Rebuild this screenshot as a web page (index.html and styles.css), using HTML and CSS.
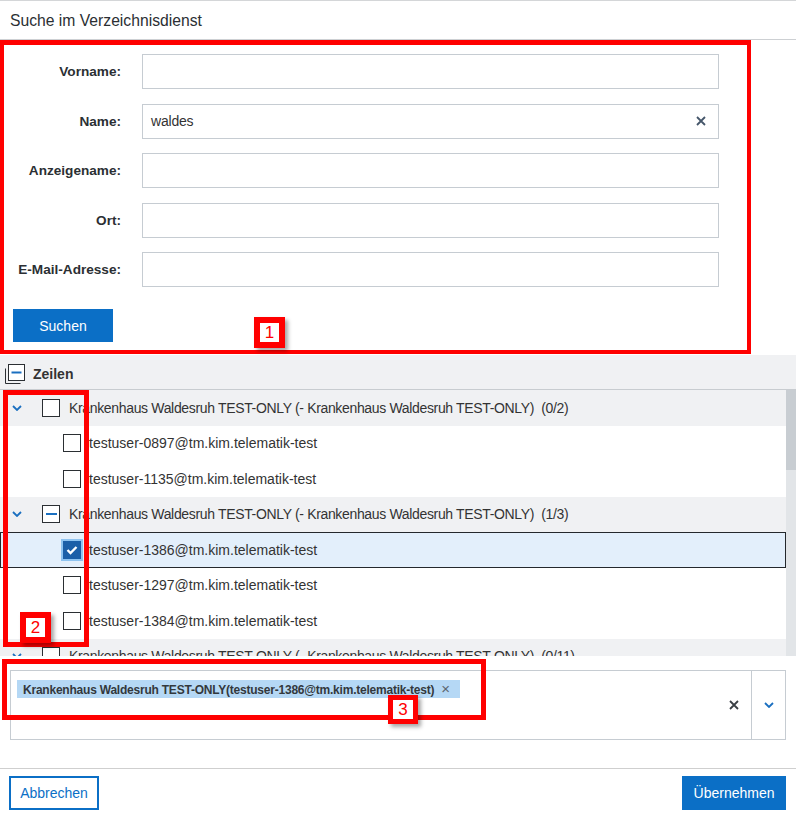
FILE: index.html
```html
<!DOCTYPE html>
<html>
  <head>
    <meta charset="utf-8">
    <title>Suche im Verzeichnisdienst</title>
    <link rel="stylesheet" href="styles.css">
  </head>
  <body>
    <div class="dialog">
      <div class="dialog-title">Suche im Verzeichnisdienst</div>

      <form class="search-form">
        <div class="field">
          <label>Vorname:</label>
          <div class="input"></div>
        </div>
        <div class="field">
          <label>Name:</label>
          <div class="input">
            <span class="value">waldes</span>
            <svg class="clear" width="10" height="10" viewBox="0 0 10 10"><path d="M1 1L9 9M9 1L1 9" /></svg>
          </div>
        </div>
        <div class="field">
          <label>Anzeigename:</label>
          <div class="input"></div>
        </div>
        <div class="field">
          <label>Ort:</label>
          <div class="input"></div>
        </div>
        <div class="field">
          <label>E-Mail-Adresse:</label>
          <div class="input"></div>
        </div>
        <button type="button" class="btn btn-primary btn-search">Suchen</button>
      </form>

      <div class="grid-head">
        <svg class="multi-icon" width="21" height="20" viewBox="0 0 21 20">
          <path class="back" d="M0.5 4.5V19.5H15.5" />
          <rect class="front" x="3.5" y="0.5" width="16" height="16" />
          <path class="minus" d="M6.5 8.5H16.5" />
        </svg>
        <span>Zeilen</span>
      </div>

      <div class="tree">
        <div class="tree-rows">
          <div class="row group">
            <svg class="chev" width="10" height="6" viewBox="0 0 10 6"><path d="M1 1L5 5L9 1" /></svg>
            <span class="check"></span>
            <span class="label">Krankenhaus Waldesruh TEST-ONLY (- Krankenhaus Waldesruh TEST-ONLY)  (0/2)</span>
          </div>
          <div class="row child">
            <span class="check"></span>
            <span class="label">testuser-0897@tm.kim.telematik-test</span>
          </div>
          <div class="row child">
            <span class="check"></span>
            <span class="label">testuser-1135@tm.kim.telematik-test</span>
          </div>
          <div class="row group">
            <svg class="chev" width="10" height="6" viewBox="0 0 10 6"><path d="M1 1L5 5L9 1" /></svg>
            <span class="check partial"></span>
            <span class="label">Krankenhaus Waldesruh TEST-ONLY (- Krankenhaus Waldesruh TEST-ONLY)  (1/3)</span>
          </div>
          <div class="row child selected">
            <span class="check checked">
              <svg width="12" height="10" viewBox="0 0 12 10"><path d="M1.5 5L4.5 8L10.5 2" /></svg>
            </span>
            <span class="label">testuser-1386@tm.kim.telematik-test</span>
          </div>
          <div class="row child">
            <span class="check"></span>
            <span class="label">testuser-1297@tm.kim.telematik-test</span>
          </div>
          <div class="row child">
            <span class="check"></span>
            <span class="label">testuser-1384@tm.kim.telematik-test</span>
          </div>
          <div class="row group">
            <svg class="chev" width="10" height="6" viewBox="0 0 10 6"><path d="M1 1L5 5L9 1" /></svg>
            <span class="check"></span>
            <span class="label">Krankenhaus Waldesruh TEST-ONLY (- Krankenhaus Waldesruh TEST-ONLY)  (0/11)</span>
          </div>
        </div>
        <div class="scrollbar"><div class="thumb"></div></div>
      </div>

      <div class="picker">
        <div class="picker-tags">
          <span class="tag">Krankenhaus Waldesruh TEST-ONLY(testuser-1386@tm.kim.telematik-test)<span class="tag-x">×</span></span>
        </div>
        <svg class="picker-clear" width="10" height="10" viewBox="0 0 10 10"><path d="M1 1L9 9M9 1L1 9" /></svg>
        <div class="picker-toggle">
          <svg class="chev" width="10" height="6" viewBox="0 0 10 6"><path d="M1 1L5 5L9 1" /></svg>
        </div>
      </div>

      <div class="dialog-footer">
        <button type="button" class="btn btn-outline">Abbrechen</button>
        <button type="button" class="btn btn-primary">Übernehmen</button>
      </div>

      <!-- annotations -->
      <div class="mark mark-2"></div>
      <div class="mark mark-3"></div>
      <span class="mark-num num-1">1</span>
      <span class="mark-num num-2">2</span>
      <span class="mark-num num-3">3</span>
    </div>
  </body>
</html>
```

FILE: styles.css
```css
* {
  margin: 0;
  padding: 0;
  box-sizing: border-box;
}

body {
  font-family: "Liberation Sans", Arial, sans-serif;
  font-size: 14px;
  color: #333;
  background: #fff;
}

.dialog {
  position: relative;
  width: 796px;
  border-top: 1px solid #d4d6d8;
}

.dialog-title {
  height: 39px;
  line-height: 39px;
  padding-left: 10px;
  font-size: 15.7px;
  color: #2b2f33;
  border-bottom: 1px solid #cdd0d3;
}

/* search form */

.search-form {
  width: 751px;
  border: 4px solid #ff0000;
  border-top-width: 5px;
  padding: 9px 0 8px;
}

.field {
  display: flex;
  align-items: center;
  height: 35px;
  margin-bottom: 14.5px;
}

.field:last-of-type {
  margin-bottom: 0;
}

.field label {
  width: 117px;
  margin-right: 21px;
  text-align: right;
  font-weight: bold;
  font-size: 13.6px;
  color: #2b2f33;
}

.input {
  display: flex;
  align-items: center;
  width: 577px;
  height: 35px;
  padding: 0 12px 0 8px;
  border: 1px solid #c6ccd2;
}

.input .value {
  flex: 1;
  letter-spacing: -0.2px;
}

.clear path,
.picker-clear path {
  fill: none;
  stroke: #45566a;
  stroke-width: 1.8;
}

.btn {
  height: 34px;
  font-family: inherit;
  font-size: 14px;
  border: 1px solid #0b6fc6;
  cursor: pointer;
}

.btn-primary {
  background: #0b6fc6;
  color: #fff;
}

.btn-outline {
  background: #fff;
  color: #0b6fc6;
  border-width: 2px;
}

.btn-search {
  width: 100px;
  height: 33px;
  margin: 22px 0 0 9px;
}

/* grid */

.grid-head {
  display: flex;
  align-items: center;
  height: 35px;
  margin-top: 1px;
  padding: 3px 0 0 5px;
  background: #f0f1f3;
  border-bottom: 1px solid #c8ccd0;
  font-weight: bold;
}

.multi-icon {
  margin-right: 7px;
}

.multi-icon .back,
.multi-icon .front {
  fill: #fff;
  stroke: #2b2f33;
}

.multi-icon .back {
  fill: none;
}

.multi-icon .minus {
  stroke: #1a6fc0;
  stroke-width: 2;
}

.tree {
  display: flex;
  height: 266px;
}

.tree-rows {
  flex: 1;
  overflow: hidden;
}

.row {
  display: flex;
  align-items: center;
  height: 35.5px;
  white-space: pre;
}

.row.group {
  padding-left: 12px;
  background: #f0f1f3;
}

.row.group .label {
  letter-spacing: -0.34px;
}

.row.child {
  padding-left: 63px;
}

.row.selected {
  background: #e3effb;
  border: 1px solid #24282c;
  padding-left: 62px;
}

.chev path {
  fill: none;
  stroke: #1a6fc0;
  stroke-width: 1.8;
}

.row .chev {
  margin-right: 20px;
}

.check {
  display: flex;
  align-items: center;
  justify-content: center;
  width: 18px;
  height: 18px;
  margin-right: 8px;
  border: 1px solid #2b2f33;
  background: #fff;
}

.group .check {
  margin-right: 9px;
}

.check.partial::before {
  content: '';
  width: 11px;
  height: 2px;
  background: #1a6fc0;
}

.check.checked {
  background: #1b5fa8;
  border-color: #1b5fa8;
  box-shadow: 0 0 0 2px #8ec3f0;
}

.check.checked path {
  fill: none;
  stroke: #fff;
  stroke-width: 2.4;
}

.scrollbar {
  width: 10px;
  background: #e2e5e8;
}

.thumb {
  height: 80px;
  background: #c8cdd2;
}

/* recipient picker */

.picker {
  display: flex;
  align-items: center;
  height: 70px;
  margin: 14px 10px 0;
  border: 1px solid #c6ccd2;
}

.picker-tags {
  flex: 1;
  align-self: flex-start;
  padding: 9px 6px;
}

.tag {
  display: inline-block;
  height: 18px;
  line-height: 18px;
  padding: 0 10px 0 6px;
  background: #b5d8f5;
  font-size: 12px;
  font-weight: bold;
  letter-spacing: -0.22px;
  color: #33383d;
}

.tag-x {
  margin-left: 7px;
  font-weight: normal;
  font-size: 15px;
  color: #5c6670;
}

.picker-clear {
  margin-right: 12px;
}

.picker-clear path {
  stroke: #3a3f44;
}

.picker-toggle {
  display: flex;
  align-items: center;
  justify-content: center;
  width: 34px;
  height: 100%;
  border-left: 1px solid #c6ccd2;
}

/* footer */

.dialog-footer {
  display: flex;
  justify-content: space-between;
  margin-top: 28px;
  padding: 7px 10px 0 9px;
  border-top: 1px solid #cfcfcf;
}

.dialog-footer .btn-outline {
  width: 90px;
}

.dialog-footer .btn-primary {
  width: 104px;
}

/* red annotation frames */

.mark {
  position: absolute;
  border: 5px solid #ff0000;
}

.mark-2 {
  left: 3px;
  top: 389px;
  width: 86px;
  height: 257px;
}

.mark-3 {
  left: 2px;
  top: 658px;
  width: 484px;
  height: 61px;
}

.mark-num {
  position: absolute;
  width: 31px;
  height: 31px;
  border: 6px solid #ff0000;
  background: #fff;
  color: #ff0000;
  font-size: 17px;
  line-height: 19px;
  text-align: center;
  box-shadow: 3px 3px 4px rgba(0, 0, 0, 0.35);
}

.num-1 {
  left: 254px;
  top: 316px;
}

.num-2 {
  left: 20px;
  top: 611px;
}

.num-3 {
  left: 388px;
  top: 694px;
  width: 30px;
  height: 29px;
  border-width: 5px;
}
```
